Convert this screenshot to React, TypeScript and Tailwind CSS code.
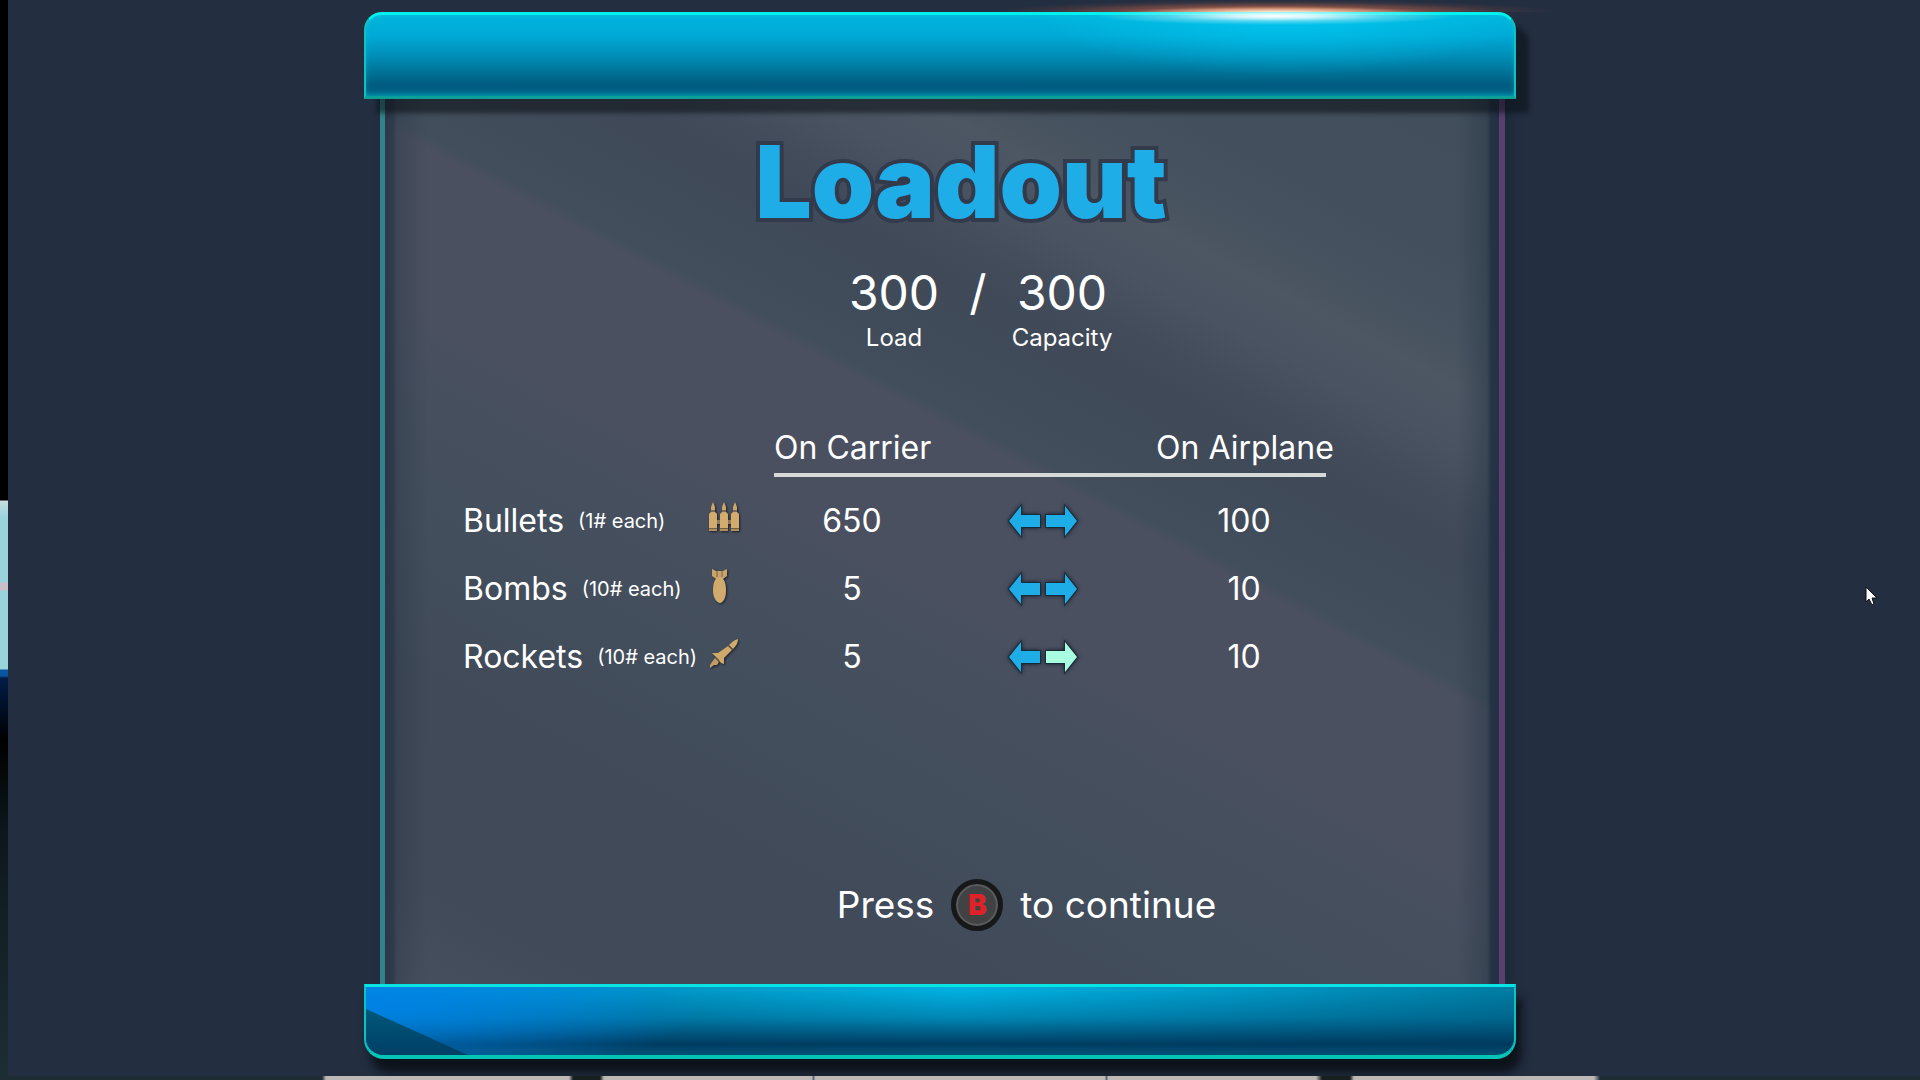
import { clsx } from "clsx";
import type { ReactNode } from "react";

type Ammo = {
  name: string;
  weight: string;
  icon: ReactNode;
  carrier: number;
  airplane: number;
  selected?: boolean;
};

function BulletsIcon() {
  return (
    <svg width="34" height="34" viewBox="0 0 34 34" className="drop-shadow-[1px_1px_1px_rgba(0,0,0,0.6)]" aria-hidden="true">
      <path d="M4 19h26v4H4z" fill="#8b7a66" />
      {[2, 13, 24].map((x) => (
        <g key={x} transform={`translate(${x} 0)`}>
          <path d="M4 1 L6 6 L6 10 L2 10 L2 6 Z" fill="#c9a56b" />
          <path d="M2 9h4v2H2z" fill="#7d6749" />
          <path d="M2 11h4l2 2v15H0V13z" fill="#d3ab6d" />
          <path d="M0 28h8v2H0z" fill="#b08d5a" />
          <path d="M0 27h8v1H0z" fill="#6f5c41" />
        </g>
      ))}
    </svg>
  );
}

function BombIcon() {
  return (
    <svg width="34" height="38" viewBox="0 0 34 38" className="drop-shadow-[1px_1px_1px_rgba(0,0,0,0.6)]" aria-hidden="true">
      <path d="M5 2l4 2h7l4-2v7l-4 3H9l-4-3z" fill="#c9a36a" />
      <path d="M10 4v6M15 4v6" stroke="#75634a" strokeWidth="1" />
      <path d="M10 11h5c3 2 4 7 4 13 0 7-3 12-6 12s-7-5-7-12c0-6 1-11 4-13z" fill="#d1aa6e" />
    </svg>
  );
}

function RocketIcon() {
  return (
    <svg width="34" height="32" viewBox="0 0 34 32" className="drop-shadow-[1px_1px_1px_rgba(0,0,0,0.6)]" aria-hidden="true">
      <path d="M31 1c0 4-2 7-5 10l-4-4c3-3 5-5 9-6z" fill="#d1aa6e" />
      <path d="M21 8l4 4-8 8 0 6-3-1-3-4-3-3-3-3 6 0z" fill="#cfa86c" />
      <path d="M8 20l4 4-2 3-3 0-4 3 0-3 2-3z" fill="#c29c62" />
      <path d="M21 7l5 5M8 19l5 5" stroke="#5b4f42" strokeWidth="1" />
    </svg>
  );
}

const ammo: Ammo[] = [
  { name: "Bullets", weight: "(1# each)", icon: <BulletsIcon />, carrier: 650, airplane: 100 },
  { name: "Bombs", weight: "(10# each)", icon: <BombIcon />, carrier: 5, airplane: 10 },
  { name: "Rockets", weight: "(10# each)", icon: <RocketIcon />, carrier: 5, airplane: 10, selected: true },
];

function ArrowButton({ label, left, active }: { label: string; left?: boolean; active?: boolean }) {
  return (
    <button aria-label={label} className="cursor-pointer">
      <svg
        width="31"
        height="30"
        viewBox="0 0 31 30"
        className={clsx(
          "overflow-visible stroke-[#0f2a3c]/70 stroke-2 drop-shadow-[0_0_2px_rgba(8,16,26,0.9)] [paint-order:stroke]",
          left && "rotate-180",
          active ? "fill-[#a9fde0]" : "fill-[#1fade8]",
        )}
        aria-hidden="true"
      >
        <path d="M0 9H19V0L31 15L19 30V21H0Z" />
      </svg>
    </button>
  );
}

function Total({ value, label }: { value: number; label: string }) {
  return (
    <div className="flex w-[100px] flex-col items-center">
      <span className="text-[48px] leading-[56px]">{value}</span>
      <span className="text-[24px] leading-[34px]">{label}</span>
    </div>
  );
}

function AmmoTable() {
  return (
    <table className="ml-[78px] mt-[73px] w-[863px] table-fixed border-collapse text-[32px] leading-10">
      <colgroup>
        <col className="w-[238px]" />
        <col className="w-[73px]" />
        <col className="w-[156px]" />
        <col className="w-[226px]" />
        <col className="w-[170px]" />
      </colgroup>
      <thead>
        <tr className="h-[47px] align-top whitespace-nowrap">
          <td colSpan={2} />
          <th scope="col" className="border-b-4 border-[#d6d9d7] text-left font-normal">On Carrier</th>
          <td className="border-b-4 border-[#d6d9d7]" />
          <th scope="col" className="border-b-4 border-[#d6d9d7] text-left font-normal">On Airplane</th>
        </tr>
        <tr className="h-3" />
      </thead>
      <tbody>
        {ammo.map((item) => (
          <tr key={item.name} className="h-[68px]">
            <th scope="row" className="font-normal whitespace-nowrap">
              <div className="flex items-center gap-3.5">
                {item.name}
                <span className="text-[20px]">{item.weight}</span>
              </div>
            </th>
            <td className="pb-1.5 pl-1.5">{item.icon}</td>
            <td className="text-center">{item.carrier}</td>
            <td>
              <div className="flex items-center justify-center gap-1.5">
                <ArrowButton left label={`Move ${item.name} to carrier`} />
                <ArrowButton label={`Move ${item.name} to airplane`} active={item.selected} />
              </div>
            </td>
            <td className="pl-1.5 text-center">{item.airplane}</td>
          </tr>
        ))}
      </tbody>
    </table>
  );
}

function TopBar() {
  return (
    <header className="relative z-10 h-[87px] rounded-t-[18px] border-x-2 border-t-3 border-b-3 border-x-[#0fc0c4] border-t-[#00f0ee] border-b-[#0b9f97] bg-[radial-gradient(240px_60px_at_80%_0%,rgba(0,205,245,0.7),transparent),linear-gradient(180deg,#00b5dd_0%,#00aad6_25%,#008cb6_52%,#006c90_75%,#005b80_86%,#005f83_92%,#007a98_100%)] shadow-[13px_14px_5px_rgba(10,14,20,0.55),inset_0_0_5px_rgba(0,220,220,0.4)]">
      {/* light flare on the top edge */}
      <div className="pointer-events-none absolute -top-[15px] right-[-42px] h-[12px] w-[560px] bg-[radial-gradient(50%_100%_at_50%_100%,rgba(255,205,170,1)_0%,rgba(240,150,105,0.85)_25%,rgba(200,105,75,0.5)_50%,rgba(150,80,60,0.2)_80%,transparent)]" />
      <div className="pointer-events-none absolute -top-[8px] right-[58px] h-[18px] w-[360px] bg-[radial-gradient(closest-side,#ffffff_0%,rgba(255,255,255,0.8)_25%,rgba(255,255,255,0.3)_60%,transparent)]" />
    </header>
  );
}

function BottomBar() {
  return (
    <footer className="relative z-10 h-[75px] overflow-hidden rounded-b-[20px] border-x-2 border-t-3 border-b-4 border-x-[#08c4c0] border-t-[#08e4e4] border-b-[#04c4b6] bg-[radial-gradient(340px_80px_at_0%_25%,rgba(0,130,230,0.95),transparent),linear-gradient(180deg,transparent_5%,rgba(0,60,100,0.35)_45%,rgba(0,52,88,0.92)_84%,rgba(0,70,105,0.85)_100%),linear-gradient(90deg,#0090dc_0%,#0096c4_25%,#00b0e0_52%,#0098c6_75%,#007ca2_100%)]">
      <div className="absolute bottom-0 left-0 h-[46px] w-[102px] bg-[linear-gradient(180deg,#00587a,#003f66)] [clip-path:polygon(0_0,100%_100%,0_100%)]" />
    </footer>
  );
}

function Cursor() {
  return (
    <svg width="13" height="20" viewBox="0 0 13 20" className="absolute right-[42px] top-[586px]" aria-hidden="true">
      <path d="M1 1V16L4 13L7 19L9 18L7 12H12Z" fill="#fff" stroke="#0b0f18" strokeWidth="1" />
    </svg>
  );
}

export default function App() {
  return (
    <div className="relative flex min-h-screen flex-col overflow-hidden bg-[#232e41] font-[Inter,sans-serif] text-white">
      <div className="flex flex-1">
        <div className="w-2 bg-[linear-gradient(180deg,#000_0_500px,#c9dde0_501px,#9bd3dd_516px_582px,#c9bfc6_583px_590px,#9bd3dd_591px_669px,#0a55a0_670px_676px,#001c48_678px,#000_740px,#0c171b_830px,#1d2e33_100%)]" />

        <main className="grid flex-1 grid-cols-[356fr_1152fr_404fr] pb-[17px] pt-3">
          <div className="col-start-2 flex flex-col">
            <TopBar />

            <section className="ml-4 mr-[11px] flex flex-1 flex-col border-l-5 border-r-6 border-l-[#328389] border-r-[#59406f] bg-[linear-gradient(90deg,rgba(35,48,66,0.75)_0,rgba(35,48,66,0.65)_8px,rgba(35,48,66,0.3)_12px,transparent_42px),linear-gradient(270deg,rgba(32,46,66,0.9)_0,rgba(32,46,66,0.85)_8px,rgba(35,50,66,0.4)_12px,transparent_42px),linear-gradient(208deg,#414e5b_0%,#434f5c_12%,#46525f_17%,#4d5663_21%,#4a5361_25%,#424c5b_29%,#3f4958_32%,#424e5b_41%,#4a5060_42%,#4a5060_53%,#454f5e_60%,#434e5c_68%,#404a59_78%,#414a59_92%,#47505e_100%)] shadow-[6px_0_8px_rgba(20,38,48,0.5)]">
              <h1 className="mt-[33px] pl-[38px] text-center text-[100px] font-black leading-[100px] text-[#1fade8] [paint-order:stroke_fill] [-webkit-text-stroke:8px_#323a4c]">
                Loadout
              </h1>

              <div className="mt-[33px] flex justify-center gap-4 pl-[72px]">
                <Total value={300} label="Load" />
                <span className="w-9 text-center text-[48px] leading-[56px]">/</span>
                <Total value={300} label="Capacity" />
              </div>

              <AmmoTable />

              <div className="mb-[53px] mt-auto flex items-center justify-center gap-[17px] pl-[169px] text-[37px] leading-[52px]">
                <span>Press</span>
                <button className="flex h-[52px] w-[52px] cursor-pointer items-center justify-center rounded-full border-5 border-[#171819] bg-[#414243] text-[28px] font-black text-[#e02228] ring-2 ring-[#5a5c5d] ring-inset">
                  B
                </button>
                <span>to continue</span>
              </div>
            </section>

            <div className="rounded-b-[20px] shadow-[6px_14px_10px_rgba(8,12,18,0.8)]">
              <BottomBar />
            </div>
          </div>
        </main>
      </div>

      <div className="relative z-10 h-1 bg-[linear-gradient(90deg,#1e2c33_0_322px,#bcb8b6_326px_569px,#18201f_573px_600px,#bcb8b6_604px_812px,#5d6a74_813px_814px,#bcb8b6_815px_1105px,#5d6a74_1106px_1107px,#bcb8b6_1108px_1316px,#18201f_1322px_1350px,#bcb8b6_1354px_1594px,#1e2c33_1600px)]" />
      <Cursor />
    </div>
  );
}
